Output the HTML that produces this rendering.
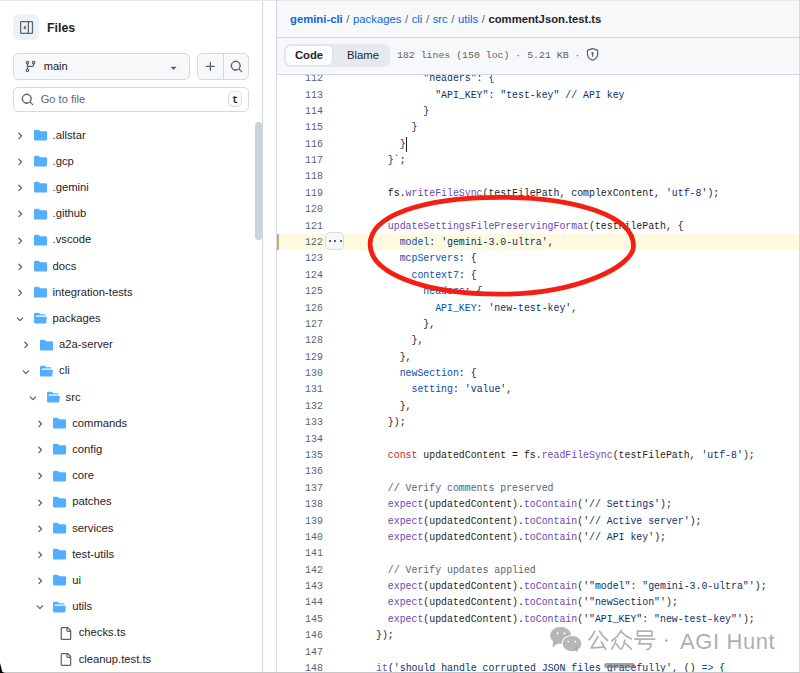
<!DOCTYPE html>
<html><head><meta charset="utf-8">
<style>
*{margin:0;padding:0;box-sizing:border-box}
html,body{width:800px;height:673px;overflow:hidden;background:#fff}
body{position:relative;font-family:"Liberation Sans",sans-serif;color:#1f2328}
.abs{position:absolute}
svg{position:absolute;overflow:visible}
.chev{width:9.83px;height:9.83px;fill:#59636e}
.fold{width:13.1px;height:12.4px;fill:#54aeff}
.file{width:13.1px;height:13.1px;fill:#59636e}
.tn{position:absolute;font-size:11.25px;line-height:16px;white-space:pre;color:#1f2328}
.ln{position:absolute;left:276px;width:46.8px;text-align:right;font-family:"Liberation Mono",monospace;font-size:9.87px;line-height:16.385px;height:16.385px;color:#59636e;white-space:pre;transform:scaleY(1.18);transform-origin:0 10.8px}
.cl{position:absolute;left:364.2px;font-family:"Liberation Mono",monospace;font-size:9.87px;line-height:16.385px;height:16.385px;color:#1f2328;white-space:pre;transform:scaleY(1.18);transform-origin:0 10.8px}
</style></head><body>

<!-- sidebar -->
<div class="abs" style="left:13px;top:14px;width:26px;height:26px;border-radius:6px;background:#eff2f5"></div>
<svg style="left:19.5px;top:20.5px;width:13.1px;height:13.1px;fill:#59636e" viewBox="0 0 16 16"><path d="M1.75 0h12.5C15.216 0 16 .784 16 1.75v12.5A1.75 1.75 0 0 1 14.25 16H1.75A1.75 1.75 0 0 1 0 14.25V1.75C0 .784.784 0 1.75 0ZM1.5 1.75v12.5c0 .138.112.25.25.25H9.5v-13H1.75a.25.25 0 0 0-.25.25ZM11 14.5h3.25a.25.25 0 0 0 .25-.25V1.75a.25.25 0 0 0-.25-.25H11Z"/><path d="M4.177 7.823 6.573 5.427A.25.25 0 0 1 7 5.604v4.792a.25.25 0 0 1-.427.177L4.177 8.177a.25.25 0 0 1 0-.354Z"/></svg>
<div class="abs" style="left:47px;top:19.5px;font-size:12.4px;font-weight:bold;line-height:16px">Files</div>

<div class="abs" style="left:13.3px;top:53.3px;width:176.3px;height:26.3px;border:1px solid #d5dade;border-radius:5px;background:#f6f8fa"></div>
<svg style="left:23.5px;top:59.5px;width:13.1px;height:13.1px;fill:#59636e" viewBox="0 0 16 16"><path d="M9.5 3.25a2.25 2.25 0 1 1 3 2.122V6A2.5 2.5 0 0 1 10 8.5H6a1 1 0 0 0-1 1v1.128a2.251 2.251 0 1 1-1.5 0V5.372a2.25 2.25 0 1 1 1.5 0v1.836A2.493 2.493 0 0 1 6 7h4a1 1 0 0 0 1-1v-.628A2.25 2.25 0 0 1 9.5 3.25Zm-6 0a.75.75 0 1 0 1.5 0 .75.75 0 0 0-1.5 0Zm8.25-.75a.75.75 0 1 0 0 1.5.75.75 0 0 0 0-1.5ZM4.25 12a.75.75 0 1 0 0 1.5.75.75 0 0 0 0-1.5Z"/></svg>
<div class="abs" style="left:43.7px;top:58px;font-size:11.1px;line-height:16px">main</div>
<svg style="left:166.7px;top:60.5px;width:13.1px;height:13.1px;fill:#59636e" viewBox="0 0 16 16"><path d="m4.427 7.427 3.396 3.396a.25.25 0 0 0 .354 0l3.396-3.396A.25.25 0 0 0 11.396 7H4.604a.25.25 0 0 0-.177.427Z"/></svg>

<div class="abs" style="left:197.3px;top:53.3px;width:51.5px;height:26.3px;border:1px solid #d5dade;border-radius:5px;background:#f6f8fa"></div>
<div class="abs" style="left:223px;top:54px;width:1px;height:25px;background:#d1d9e0"></div>
<svg style="left:203.5px;top:60px;width:13.1px;height:13.1px;fill:#59636e" viewBox="0 0 16 16"><path d="M7.75 2a.75.75 0 0 1 .75.75V7h4.25a.75.75 0 0 1 0 1.5H8.5v4.25a.75.75 0 0 1-1.5 0V8.5H2.75a.75.75 0 0 1 0-1.5H7V2.75A.75.75 0 0 1 7.75 2Z"/></svg>
<svg style="left:229.5px;top:60px;width:13.1px;height:13.1px;fill:#59636e" viewBox="0 0 16 16"><path d="M10.68 11.74a6 6 0 0 1-7.922-8.982 6 6 0 0 1 8.982 7.922l3.04 3.04a.749.749 0 0 1-.326 1.275.749.749 0 0 1-.734-.215ZM11.5 7a4.499 4.499 0 1 0-8.997 0A4.499 4.499 0 0 0 11.5 7Z"/></svg>

<div class="abs" style="left:13.3px;top:86.5px;width:235.7px;height:25.3px;border:1px solid #d5dade;border-radius:5px;background:#fff"></div>
<svg style="left:20.5px;top:93px;width:13.1px;height:13.1px;fill:#59636e" viewBox="0 0 16 16"><path d="M10.68 11.74a6 6 0 0 1-7.922-8.982 6 6 0 0 1 8.982 7.922l3.04 3.04a.749.749 0 0 1-.326 1.275.749.749 0 0 1-.734-.215ZM11.5 7a4.499 4.499 0 1 0-8.997 0A4.499 4.499 0 0 0 11.5 7Z"/></svg>
<div class="abs" style="left:40.7px;top:91px;font-size:11.1px;line-height:16px;color:#59636e">Go to file</div>
<div class="abs" style="left:228.3px;top:91.2px;width:13.8px;height:15.6px;border:1px solid #dde1e5;border-bottom-color:#d0d5da;border-radius:5px;background:#f8f9fa;font-family:'Liberation Mono',monospace;font-weight:bold;font-size:10.5px;line-height:17.3px;text-align:center;color:#2a2f35">t</div>

<svg class="chev" style="left:14.90px;top:130.80px" viewBox="0 0 12 12"><path d="M4.7 10c-.2 0-.4-.1-.5-.2-.3-.3-.3-.8 0-1.1L6.9 6 4.2 3.3c-.3-.3-.3-.8 0-1.1.3-.3.8-.3 1.1 0l3.3 3.2c.3.3.3.8 0 1.1L5.3 9.7c-.2.2-.4.3-.6.3Z"/></svg><svg class="fold" style="left:33.60px;top:129.00px" viewBox="0 0 16 16" preserveAspectRatio="none"><path d="M1.75 1A1.75 1.75 0 0 0 0 2.75v10.5C0 14.216.784 15 1.75 15h12.5A1.75 1.75 0 0 0 16 13.25v-8.5A1.75 1.75 0 0 0 14.25 3H7.5a.25.25 0 0 1-.2-.1l-.9-1.2C6.07 1.26 5.55 1 5 1H1.75Z"/></svg><div class="tn" style="left:52.50px;top:126.50px">.allstar</div>
<svg class="chev" style="left:14.90px;top:157.00px" viewBox="0 0 12 12"><path d="M4.7 10c-.2 0-.4-.1-.5-.2-.3-.3-.3-.8 0-1.1L6.9 6 4.2 3.3c-.3-.3-.3-.8 0-1.1.3-.3.8-.3 1.1 0l3.3 3.2c.3.3.3.8 0 1.1L5.3 9.7c-.2.2-.4.3-.6.3Z"/></svg><svg class="fold" style="left:33.60px;top:155.20px" viewBox="0 0 16 16" preserveAspectRatio="none"><path d="M1.75 1A1.75 1.75 0 0 0 0 2.75v10.5C0 14.216.784 15 1.75 15h12.5A1.75 1.75 0 0 0 16 13.25v-8.5A1.75 1.75 0 0 0 14.25 3H7.5a.25.25 0 0 1-.2-.1l-.9-1.2C6.07 1.26 5.55 1 5 1H1.75Z"/></svg><div class="tn" style="left:52.50px;top:152.70px">.gcp</div>
<svg class="chev" style="left:14.90px;top:183.20px" viewBox="0 0 12 12"><path d="M4.7 10c-.2 0-.4-.1-.5-.2-.3-.3-.3-.8 0-1.1L6.9 6 4.2 3.3c-.3-.3-.3-.8 0-1.1.3-.3.8-.3 1.1 0l3.3 3.2c.3.3.3.8 0 1.1L5.3 9.7c-.2.2-.4.3-.6.3Z"/></svg><svg class="fold" style="left:33.60px;top:181.40px" viewBox="0 0 16 16" preserveAspectRatio="none"><path d="M1.75 1A1.75 1.75 0 0 0 0 2.75v10.5C0 14.216.784 15 1.75 15h12.5A1.75 1.75 0 0 0 16 13.25v-8.5A1.75 1.75 0 0 0 14.25 3H7.5a.25.25 0 0 1-.2-.1l-.9-1.2C6.07 1.26 5.55 1 5 1H1.75Z"/></svg><div class="tn" style="left:52.50px;top:178.90px">.gemini</div>
<svg class="chev" style="left:14.90px;top:209.40px" viewBox="0 0 12 12"><path d="M4.7 10c-.2 0-.4-.1-.5-.2-.3-.3-.3-.8 0-1.1L6.9 6 4.2 3.3c-.3-.3-.3-.8 0-1.1.3-.3.8-.3 1.1 0l3.3 3.2c.3.3.3.8 0 1.1L5.3 9.7c-.2.2-.4.3-.6.3Z"/></svg><svg class="fold" style="left:33.60px;top:207.60px" viewBox="0 0 16 16" preserveAspectRatio="none"><path d="M1.75 1A1.75 1.75 0 0 0 0 2.75v10.5C0 14.216.784 15 1.75 15h12.5A1.75 1.75 0 0 0 16 13.25v-8.5A1.75 1.75 0 0 0 14.25 3H7.5a.25.25 0 0 1-.2-.1l-.9-1.2C6.07 1.26 5.55 1 5 1H1.75Z"/></svg><div class="tn" style="left:52.50px;top:205.10px">.github</div>
<svg class="chev" style="left:14.90px;top:235.60px" viewBox="0 0 12 12"><path d="M4.7 10c-.2 0-.4-.1-.5-.2-.3-.3-.3-.8 0-1.1L6.9 6 4.2 3.3c-.3-.3-.3-.8 0-1.1.3-.3.8-.3 1.1 0l3.3 3.2c.3.3.3.8 0 1.1L5.3 9.7c-.2.2-.4.3-.6.3Z"/></svg><svg class="fold" style="left:33.60px;top:233.80px" viewBox="0 0 16 16" preserveAspectRatio="none"><path d="M1.75 1A1.75 1.75 0 0 0 0 2.75v10.5C0 14.216.784 15 1.75 15h12.5A1.75 1.75 0 0 0 16 13.25v-8.5A1.75 1.75 0 0 0 14.25 3H7.5a.25.25 0 0 1-.2-.1l-.9-1.2C6.07 1.26 5.55 1 5 1H1.75Z"/></svg><div class="tn" style="left:52.50px;top:231.30px">.vscode</div>
<svg class="chev" style="left:14.90px;top:261.80px" viewBox="0 0 12 12"><path d="M4.7 10c-.2 0-.4-.1-.5-.2-.3-.3-.3-.8 0-1.1L6.9 6 4.2 3.3c-.3-.3-.3-.8 0-1.1.3-.3.8-.3 1.1 0l3.3 3.2c.3.3.3.8 0 1.1L5.3 9.7c-.2.2-.4.3-.6.3Z"/></svg><svg class="fold" style="left:33.60px;top:260.00px" viewBox="0 0 16 16" preserveAspectRatio="none"><path d="M1.75 1A1.75 1.75 0 0 0 0 2.75v10.5C0 14.216.784 15 1.75 15h12.5A1.75 1.75 0 0 0 16 13.25v-8.5A1.75 1.75 0 0 0 14.25 3H7.5a.25.25 0 0 1-.2-.1l-.9-1.2C6.07 1.26 5.55 1 5 1H1.75Z"/></svg><div class="tn" style="left:52.50px;top:257.50px">docs</div>
<svg class="chev" style="left:14.90px;top:288.00px" viewBox="0 0 12 12"><path d="M4.7 10c-.2 0-.4-.1-.5-.2-.3-.3-.3-.8 0-1.1L6.9 6 4.2 3.3c-.3-.3-.3-.8 0-1.1.3-.3.8-.3 1.1 0l3.3 3.2c.3.3.3.8 0 1.1L5.3 9.7c-.2.2-.4.3-.6.3Z"/></svg><svg class="fold" style="left:33.60px;top:286.20px" viewBox="0 0 16 16" preserveAspectRatio="none"><path d="M1.75 1A1.75 1.75 0 0 0 0 2.75v10.5C0 14.216.784 15 1.75 15h12.5A1.75 1.75 0 0 0 16 13.25v-8.5A1.75 1.75 0 0 0 14.25 3H7.5a.25.25 0 0 1-.2-.1l-.9-1.2C6.07 1.26 5.55 1 5 1H1.75Z"/></svg><div class="tn" style="left:52.50px;top:283.70px">integration-tests</div>
<svg class="chev" style="left:14.90px;top:314.20px" viewBox="0 0 12 12"><path d="M6 8.825c-.2 0-.4-.1-.5-.2l-3.3-3.3c-.3-.3-.3-.8 0-1.1.3-.3.8-.3 1.1 0l2.7 2.7 2.7-2.7c.3-.3.8-.3 1.1 0 .3.3.3.8 0 1.1l-3.2 3.2c-.2.2-.4.3-.6.3Z"/></svg><svg class="fold" style="left:33.60px;top:312.40px" viewBox="0 0 16 16" preserveAspectRatio="none"><path d="M.513 1.513A1.75 1.75 0 0 1 1.75 1h3.5c.55 0 1.07.26 1.4.7l.9 1.2a.25.25 0 0 0 .2.1H13a1 1 0 0 1 1 1v.5H2.75a.75.75 0 0 0 0 1.5h11.978a1 1 0 0 1 .994 1.117L15 13.25A1.75 1.75 0 0 1 13.25 15H1.75A1.75 1.75 0 0 1 0 13.25V2.75c0-.464.184-.91.513-1.237Z"/></svg><div class="tn" style="left:52.50px;top:309.90px">packages</div>
<svg class="chev" style="left:21.45px;top:340.40px" viewBox="0 0 12 12"><path d="M4.7 10c-.2 0-.4-.1-.5-.2-.3-.3-.3-.8 0-1.1L6.9 6 4.2 3.3c-.3-.3-.3-.8 0-1.1.3-.3.8-.3 1.1 0l3.3 3.2c.3.3.3.8 0 1.1L5.3 9.7c-.2.2-.4.3-.6.3Z"/></svg><svg class="fold" style="left:40.15px;top:338.60px" viewBox="0 0 16 16" preserveAspectRatio="none"><path d="M1.75 1A1.75 1.75 0 0 0 0 2.75v10.5C0 14.216.784 15 1.75 15h12.5A1.75 1.75 0 0 0 16 13.25v-8.5A1.75 1.75 0 0 0 14.25 3H7.5a.25.25 0 0 1-.2-.1l-.9-1.2C6.07 1.26 5.55 1 5 1H1.75Z"/></svg><div class="tn" style="left:59.05px;top:336.10px">a2a-server</div>
<svg class="chev" style="left:21.45px;top:366.60px" viewBox="0 0 12 12"><path d="M6 8.825c-.2 0-.4-.1-.5-.2l-3.3-3.3c-.3-.3-.3-.8 0-1.1.3-.3.8-.3 1.1 0l2.7 2.7 2.7-2.7c.3-.3.8-.3 1.1 0 .3.3.3.8 0 1.1l-3.2 3.2c-.2.2-.4.3-.6.3Z"/></svg><svg class="fold" style="left:40.15px;top:364.80px" viewBox="0 0 16 16" preserveAspectRatio="none"><path d="M.513 1.513A1.75 1.75 0 0 1 1.75 1h3.5c.55 0 1.07.26 1.4.7l.9 1.2a.25.25 0 0 0 .2.1H13a1 1 0 0 1 1 1v.5H2.75a.75.75 0 0 0 0 1.5h11.978a1 1 0 0 1 .994 1.117L15 13.25A1.75 1.75 0 0 1 13.25 15H1.75A1.75 1.75 0 0 1 0 13.25V2.75c0-.464.184-.91.513-1.237Z"/></svg><div class="tn" style="left:59.05px;top:362.30px">cli</div>
<svg class="chev" style="left:28.00px;top:392.80px" viewBox="0 0 12 12"><path d="M6 8.825c-.2 0-.4-.1-.5-.2l-3.3-3.3c-.3-.3-.3-.8 0-1.1.3-.3.8-.3 1.1 0l2.7 2.7 2.7-2.7c.3-.3.8-.3 1.1 0 .3.3.3.8 0 1.1l-3.2 3.2c-.2.2-.4.3-.6.3Z"/></svg><svg class="fold" style="left:46.70px;top:391.00px" viewBox="0 0 16 16" preserveAspectRatio="none"><path d="M.513 1.513A1.75 1.75 0 0 1 1.75 1h3.5c.55 0 1.07.26 1.4.7l.9 1.2a.25.25 0 0 0 .2.1H13a1 1 0 0 1 1 1v.5H2.75a.75.75 0 0 0 0 1.5h11.978a1 1 0 0 1 .994 1.117L15 13.25A1.75 1.75 0 0 1 13.25 15H1.75A1.75 1.75 0 0 1 0 13.25V2.75c0-.464.184-.91.513-1.237Z"/></svg><div class="tn" style="left:65.60px;top:388.50px">src</div>
<svg class="chev" style="left:34.55px;top:419.00px" viewBox="0 0 12 12"><path d="M4.7 10c-.2 0-.4-.1-.5-.2-.3-.3-.3-.8 0-1.1L6.9 6 4.2 3.3c-.3-.3-.3-.8 0-1.1.3-.3.8-.3 1.1 0l3.3 3.2c.3.3.3.8 0 1.1L5.3 9.7c-.2.2-.4.3-.6.3Z"/></svg><svg class="fold" style="left:53.25px;top:417.20px" viewBox="0 0 16 16" preserveAspectRatio="none"><path d="M1.75 1A1.75 1.75 0 0 0 0 2.75v10.5C0 14.216.784 15 1.75 15h12.5A1.75 1.75 0 0 0 16 13.25v-8.5A1.75 1.75 0 0 0 14.25 3H7.5a.25.25 0 0 1-.2-.1l-.9-1.2C6.07 1.26 5.55 1 5 1H1.75Z"/></svg><div class="tn" style="left:72.15px;top:414.70px">commands</div>
<svg class="chev" style="left:34.55px;top:445.20px" viewBox="0 0 12 12"><path d="M4.7 10c-.2 0-.4-.1-.5-.2-.3-.3-.3-.8 0-1.1L6.9 6 4.2 3.3c-.3-.3-.3-.8 0-1.1.3-.3.8-.3 1.1 0l3.3 3.2c.3.3.3.8 0 1.1L5.3 9.7c-.2.2-.4.3-.6.3Z"/></svg><svg class="fold" style="left:53.25px;top:443.40px" viewBox="0 0 16 16" preserveAspectRatio="none"><path d="M1.75 1A1.75 1.75 0 0 0 0 2.75v10.5C0 14.216.784 15 1.75 15h12.5A1.75 1.75 0 0 0 16 13.25v-8.5A1.75 1.75 0 0 0 14.25 3H7.5a.25.25 0 0 1-.2-.1l-.9-1.2C6.07 1.26 5.55 1 5 1H1.75Z"/></svg><div class="tn" style="left:72.15px;top:440.90px">config</div>
<svg class="chev" style="left:34.55px;top:471.40px" viewBox="0 0 12 12"><path d="M4.7 10c-.2 0-.4-.1-.5-.2-.3-.3-.3-.8 0-1.1L6.9 6 4.2 3.3c-.3-.3-.3-.8 0-1.1.3-.3.8-.3 1.1 0l3.3 3.2c.3.3.3.8 0 1.1L5.3 9.7c-.2.2-.4.3-.6.3Z"/></svg><svg class="fold" style="left:53.25px;top:469.60px" viewBox="0 0 16 16" preserveAspectRatio="none"><path d="M1.75 1A1.75 1.75 0 0 0 0 2.75v10.5C0 14.216.784 15 1.75 15h12.5A1.75 1.75 0 0 0 16 13.25v-8.5A1.75 1.75 0 0 0 14.25 3H7.5a.25.25 0 0 1-.2-.1l-.9-1.2C6.07 1.26 5.55 1 5 1H1.75Z"/></svg><div class="tn" style="left:72.15px;top:467.10px">core</div>
<svg class="chev" style="left:34.55px;top:497.60px" viewBox="0 0 12 12"><path d="M4.7 10c-.2 0-.4-.1-.5-.2-.3-.3-.3-.8 0-1.1L6.9 6 4.2 3.3c-.3-.3-.3-.8 0-1.1.3-.3.8-.3 1.1 0l3.3 3.2c.3.3.3.8 0 1.1L5.3 9.7c-.2.2-.4.3-.6.3Z"/></svg><svg class="fold" style="left:53.25px;top:495.80px" viewBox="0 0 16 16" preserveAspectRatio="none"><path d="M1.75 1A1.75 1.75 0 0 0 0 2.75v10.5C0 14.216.784 15 1.75 15h12.5A1.75 1.75 0 0 0 16 13.25v-8.5A1.75 1.75 0 0 0 14.25 3H7.5a.25.25 0 0 1-.2-.1l-.9-1.2C6.07 1.26 5.55 1 5 1H1.75Z"/></svg><div class="tn" style="left:72.15px;top:493.30px">patches</div>
<svg class="chev" style="left:34.55px;top:523.80px" viewBox="0 0 12 12"><path d="M4.7 10c-.2 0-.4-.1-.5-.2-.3-.3-.3-.8 0-1.1L6.9 6 4.2 3.3c-.3-.3-.3-.8 0-1.1.3-.3.8-.3 1.1 0l3.3 3.2c.3.3.3.8 0 1.1L5.3 9.7c-.2.2-.4.3-.6.3Z"/></svg><svg class="fold" style="left:53.25px;top:522.00px" viewBox="0 0 16 16" preserveAspectRatio="none"><path d="M1.75 1A1.75 1.75 0 0 0 0 2.75v10.5C0 14.216.784 15 1.75 15h12.5A1.75 1.75 0 0 0 16 13.25v-8.5A1.75 1.75 0 0 0 14.25 3H7.5a.25.25 0 0 1-.2-.1l-.9-1.2C6.07 1.26 5.55 1 5 1H1.75Z"/></svg><div class="tn" style="left:72.15px;top:519.50px">services</div>
<svg class="chev" style="left:34.55px;top:550.00px" viewBox="0 0 12 12"><path d="M4.7 10c-.2 0-.4-.1-.5-.2-.3-.3-.3-.8 0-1.1L6.9 6 4.2 3.3c-.3-.3-.3-.8 0-1.1.3-.3.8-.3 1.1 0l3.3 3.2c.3.3.3.8 0 1.1L5.3 9.7c-.2.2-.4.3-.6.3Z"/></svg><svg class="fold" style="left:53.25px;top:548.20px" viewBox="0 0 16 16" preserveAspectRatio="none"><path d="M1.75 1A1.75 1.75 0 0 0 0 2.75v10.5C0 14.216.784 15 1.75 15h12.5A1.75 1.75 0 0 0 16 13.25v-8.5A1.75 1.75 0 0 0 14.25 3H7.5a.25.25 0 0 1-.2-.1l-.9-1.2C6.07 1.26 5.55 1 5 1H1.75Z"/></svg><div class="tn" style="left:72.15px;top:545.70px">test-utils</div>
<svg class="chev" style="left:34.55px;top:576.20px" viewBox="0 0 12 12"><path d="M4.7 10c-.2 0-.4-.1-.5-.2-.3-.3-.3-.8 0-1.1L6.9 6 4.2 3.3c-.3-.3-.3-.8 0-1.1.3-.3.8-.3 1.1 0l3.3 3.2c.3.3.3.8 0 1.1L5.3 9.7c-.2.2-.4.3-.6.3Z"/></svg><svg class="fold" style="left:53.25px;top:574.40px" viewBox="0 0 16 16" preserveAspectRatio="none"><path d="M1.75 1A1.75 1.75 0 0 0 0 2.75v10.5C0 14.216.784 15 1.75 15h12.5A1.75 1.75 0 0 0 16 13.25v-8.5A1.75 1.75 0 0 0 14.25 3H7.5a.25.25 0 0 1-.2-.1l-.9-1.2C6.07 1.26 5.55 1 5 1H1.75Z"/></svg><div class="tn" style="left:72.15px;top:571.90px">ui</div>
<svg class="chev" style="left:34.55px;top:602.40px" viewBox="0 0 12 12"><path d="M6 8.825c-.2 0-.4-.1-.5-.2l-3.3-3.3c-.3-.3-.3-.8 0-1.1.3-.3.8-.3 1.1 0l2.7 2.7 2.7-2.7c.3-.3.8-.3 1.1 0 .3.3.3.8 0 1.1l-3.2 3.2c-.2.2-.4.3-.6.3Z"/></svg><svg class="fold" style="left:53.25px;top:600.60px" viewBox="0 0 16 16" preserveAspectRatio="none"><path d="M.513 1.513A1.75 1.75 0 0 1 1.75 1h3.5c.55 0 1.07.26 1.4.7l.9 1.2a.25.25 0 0 0 .2.1H13a1 1 0 0 1 1 1v.5H2.75a.75.75 0 0 0 0 1.5h11.978a1 1 0 0 1 .994 1.117L15 13.25A1.75 1.75 0 0 1 13.25 15H1.75A1.75 1.75 0 0 1 0 13.25V2.75c0-.464.184-.91.513-1.237Z"/></svg><div class="tn" style="left:72.15px;top:598.10px">utils</div>
<svg class="file" style="left:59.00px;top:626.80px" viewBox="0 0 16 16"><path d="M2 1.75C2 .784 2.784 0 3.75 0h6.586c.464 0 .909.184 1.237.513l2.914 2.914c.329.328.513.773.513 1.237v9.586A1.75 1.75 0 0 1 13.25 16h-9.5A1.75 1.75 0 0 1 2 14.25Zm1.75-.25a.25.25 0 0 0-.25.25v12.5c0 .138.112.25.25.25h9.5a.25.25 0 0 0 .25-.25V6h-2.75A1.75 1.75 0 0 1 9 4.25V1.5Zm6.75.062V4.25c0 .138.112.25.25.25h2.688l-.011-.013-2.914-2.914-.013-.011Z"/></svg><div class="tn" style="left:78.70px;top:624.30px">checks.ts</div>
<svg class="file" style="left:59.00px;top:653.00px" viewBox="0 0 16 16"><path d="M2 1.75C2 .784 2.784 0 3.75 0h6.586c.464 0 .909.184 1.237.513l2.914 2.914c.329.328.513.773.513 1.237v9.586A1.75 1.75 0 0 1 13.25 16h-9.5A1.75 1.75 0 0 1 2 14.25Zm1.75-.25a.25.25 0 0 0-.25.25v12.5c0 .138.112.25.25.25h9.5a.25.25 0 0 0 .25-.25V6h-2.75A1.75 1.75 0 0 1 9 4.25V1.5Zm6.75.062V4.25c0 .138.112.25.25.25h2.688l-.011-.013-2.914-2.914-.013-.011Z"/></svg><div class="tn" style="left:78.70px;top:650.50px">cleanup.test.ts</div>

<div class="abs" style="left:254.5px;top:122px;width:7.5px;height:118px;border-radius:4px;background:#c9d4dd"></div>
<div class="abs" style="left:262px;top:0;width:1px;height:673px;background:#d1d9e0"></div>

<!-- code box -->
<div class="abs" style="left:276px;top:0;width:524px;height:74px;background:#f6f8fa"></div>
<div class="abs" style="left:0;top:0;width:800px;height:1px;background:#e6e8ea"></div>
<div class="abs" style="left:276px;top:37px;width:524px;height:1px;background:#d1d9e0"></div>
<div class="abs" style="left:276px;top:0;width:1px;height:673px;background:#d1d9e0"></div>
<div class="abs" style="left:799px;top:0;width:1px;height:673px;background:#d6dade"></div>

<div class="abs" style="left:290px;top:10.5px;font-size:11.3px;line-height:16px;white-space:pre;color:#59636e"><b style="color:#0969da">gemini-cli</b><span style="padding:0 0.45px"> / </span><span style="color:#0969da">packages</span><span style="padding:0 0.45px"> / </span><span style="color:#0969da">cli</span><span style="padding:0 0.45px"> / </span><span style="color:#0969da">src</span><span style="padding:0 0.45px"> / </span><span style="color:#0969da">utils</span><span style="padding:0 0.45px"> / </span><b style="color:#1f2328">commentJson.test.ts</b></div>

<!-- highlight -->
<div class="abs" style="left:277px;top:234px;width:522px;height:16.385px;background:#fefae0"></div>
<div class="abs" style="left:277px;top:234px;width:2px;height:16.385px;background:#c4ad7c"></div>

<div class="ln" style="top:71.15px">112</div><div class="cl" style="top:71.15px">          <span style="color:#0a3069">&quot;headers&quot;: {</span></div>
<div class="ln" style="top:87.53px">113</div><div class="cl" style="top:87.53px">            <span style="color:#0a3069">&quot;API_KEY&quot;: &quot;test-key&quot; // API key</span></div>
<div class="ln" style="top:103.92px">114</div><div class="cl" style="top:103.92px">          <span style="color:#0a3069">}</span></div>
<div class="ln" style="top:120.30px">115</div><div class="cl" style="top:120.30px">        <span style="color:#0a3069">}</span></div>
<div class="ln" style="top:136.69px">116</div><div class="cl" style="top:136.69px">      <span style="color:#0a3069">}</span></div>
<div class="ln" style="top:153.07px">117</div><div class="cl" style="top:153.07px">    <span style="color:#0a3069">}`</span>;</div>
<div class="ln" style="top:169.46px">118</div><div class="cl" style="top:169.46px"></div>
<div class="ln" style="top:185.84px">119</div><div class="cl" style="top:185.84px">    fs.<span style="color:#6c47b8">writeFileSync</span>(testFilePath, complexContent, <span style="color:#0a3069">&#x27;utf-8&#x27;</span>);</div>
<div class="ln" style="top:202.23px">120</div><div class="cl" style="top:202.23px"></div>
<div class="ln" style="top:218.61px">121</div><div class="cl" style="top:218.61px">    <span style="color:#6c47b8">updateSettingsFilePreservingFormat</span>(testFilePath, {</div>
<div class="ln" style="top:235.00px">122</div><div class="cl" style="top:235.00px">      <span style="color:#0550ae">model</span>: <span style="color:#0a3069">&#x27;gemini-3.0-ultra&#x27;</span>,</div>
<div class="ln" style="top:251.38px">123</div><div class="cl" style="top:251.38px">      <span style="color:#0550ae">mcpServers</span>: {</div>
<div class="ln" style="top:267.77px">124</div><div class="cl" style="top:267.77px">        <span style="color:#0550ae">context7</span>: {</div>
<div class="ln" style="top:284.15px">125</div><div class="cl" style="top:284.15px">          <span style="color:#0550ae">headers</span>: {</div>
<div class="ln" style="top:300.54px">126</div><div class="cl" style="top:300.54px">            <span style="color:#0550ae">API_KEY</span>: <span style="color:#0a3069">&#x27;new-test-key&#x27;</span>,</div>
<div class="ln" style="top:316.93px">127</div><div class="cl" style="top:316.93px">          },</div>
<div class="ln" style="top:333.31px">128</div><div class="cl" style="top:333.31px">        },</div>
<div class="ln" style="top:349.69px">129</div><div class="cl" style="top:349.69px">      },</div>
<div class="ln" style="top:366.08px">130</div><div class="cl" style="top:366.08px">      <span style="color:#0550ae">newSection</span>: {</div>
<div class="ln" style="top:382.47px">131</div><div class="cl" style="top:382.47px">        <span style="color:#0550ae">setting</span>: <span style="color:#0a3069">&#x27;value&#x27;</span>,</div>
<div class="ln" style="top:398.85px">132</div><div class="cl" style="top:398.85px">      },</div>
<div class="ln" style="top:415.24px">133</div><div class="cl" style="top:415.24px">    });</div>
<div class="ln" style="top:431.62px">134</div><div class="cl" style="top:431.62px"></div>
<div class="ln" style="top:448.00px">135</div><div class="cl" style="top:448.00px">    <span style="color:#cf222e">const</span> updatedContent = fs.<span style="color:#6c47b8">readFileSync</span>(testFilePath, <span style="color:#0a3069">&#x27;utf-8&#x27;</span>);</div>
<div class="ln" style="top:464.39px">136</div><div class="cl" style="top:464.39px"></div>
<div class="ln" style="top:480.78px">137</div><div class="cl" style="top:480.78px">    <span style="color:#59636e">// Verify comments preserved</span></div>
<div class="ln" style="top:497.16px">138</div><div class="cl" style="top:497.16px">    <span style="color:#6c47b8">expect</span>(updatedContent).<span style="color:#6c47b8">toContain</span>(<span style="color:#0a3069">&#x27;// Settings&#x27;</span>);</div>
<div class="ln" style="top:513.55px">139</div><div class="cl" style="top:513.55px">    <span style="color:#6c47b8">expect</span>(updatedContent).<span style="color:#6c47b8">toContain</span>(<span style="color:#0a3069">&#x27;// Active server&#x27;</span>);</div>
<div class="ln" style="top:529.93px">140</div><div class="cl" style="top:529.93px">    <span style="color:#6c47b8">expect</span>(updatedContent).<span style="color:#6c47b8">toContain</span>(<span style="color:#0a3069">&#x27;// API key&#x27;</span>);</div>
<div class="ln" style="top:546.32px">141</div><div class="cl" style="top:546.32px"></div>
<div class="ln" style="top:562.70px">142</div><div class="cl" style="top:562.70px">    <span style="color:#59636e">// Verify updates applied</span></div>
<div class="ln" style="top:579.09px">143</div><div class="cl" style="top:579.09px">    <span style="color:#6c47b8">expect</span>(updatedContent).<span style="color:#6c47b8">toContain</span>(<span style="color:#0a3069">&#x27;&quot;model&quot;: &quot;gemini-3.0-ultra&quot;&#x27;</span>);</div>
<div class="ln" style="top:595.47px">144</div><div class="cl" style="top:595.47px">    <span style="color:#6c47b8">expect</span>(updatedContent).<span style="color:#6c47b8">toContain</span>(<span style="color:#0a3069">&#x27;&quot;newSection&quot;&#x27;</span>);</div>
<div class="ln" style="top:611.86px">145</div><div class="cl" style="top:611.86px">    <span style="color:#6c47b8">expect</span>(updatedContent).<span style="color:#6c47b8">toContain</span>(<span style="color:#0a3069">&#x27;&quot;API_KEY&quot;: &quot;new-test-key&quot;&#x27;</span>);</div>
<div class="ln" style="top:628.24px">146</div><div class="cl" style="top:628.24px">  });</div>
<div class="ln" style="top:644.62px">147</div><div class="cl" style="top:644.62px"></div>
<div class="ln" style="top:661.01px">148</div><div class="cl" style="top:661.01px">  <span style="color:#6c47b8">it</span>(<span style="color:#0a3069">&#x27;should handle corrupted JSON files gracefully&#x27;</span>, () <span style="color:#0550ae">=&gt;</span> {</div>

<div class="abs" style="left:277px;top:38px;width:522px;height:37px;background:#f6f8fa;border-bottom:1px solid #d1d9e0"></div>
<div class="abs" style="left:284.3px;top:44.3px;width:105.7px;height:22.7px;border-radius:6px;background:#e6eaef"></div>
<div class="abs" style="left:285px;top:45px;width:48px;height:21.3px;border-radius:6px;background:#fff;border:1px solid #dde2e7;font-size:11.3px;font-weight:bold;line-height:19px;text-align:center">Code</div>
<div class="abs" style="left:334.5px;top:45px;width:57px;height:21.3px;font-size:11.3px;line-height:21px;text-align:center;color:#1f2328">Blame</div>
<div class="abs" style="left:397px;top:48px;font-family:'Liberation Mono',monospace;font-size:9.87px;line-height:16px;color:#59636e;white-space:pre">182 lines (150 loc) · 5.21 KB ·</div>
<svg style="left:586px;top:48px;width:13.1px;height:13.1px;fill:#59636e" viewBox="0 0 16 16"><path d="M7.467.133a1.748 1.748 0 0 1 1.066 0l5.25 1.68A1.75 1.75 0 0 1 15 3.48V7c0 1.566-.32 3.182-1.303 4.682-.983 1.498-2.585 2.813-5.032 3.855a1.697 1.697 0 0 1-1.33 0c-2.447-1.042-4.049-2.357-5.032-3.855C1.32 10.182 1 8.566 1 7V3.48a1.755 1.755 0 0 1 1.217-1.667Zm.61 1.429a.25.25 0 0 0-.153 0l-5.25 1.68a.25.25 0 0 0-.174.238V7c0 1.358.275 2.666 1.057 3.86.784 1.194 2.121 2.34 4.366 3.297a.196.196 0 0 0 .154 0c2.245-.956 3.582-2.104 4.366-3.298C13.225 9.666 13.5 8.36 13.5 7V3.48a.251.251 0 0 0-.174-.237l-5.25-1.68ZM9.5 6.5a1.5 1.5 0 0 1-.75 1.3V10a.75.75 0 0 1-1.5 0V7.8A1.5 1.5 0 1 1 9.5 6.5Z"/></svg>

<!-- dots button -->
<div class="abs" style="left:325.4px;top:231.7px;width:19px;height:18.7px;border-radius:5px;background:#f6f8fa;border:1px solid #d8dce0"></div>
<div class="abs" style="left:329px;top:240px;width:2px;height:2px;border-radius:1px;background:#2a2f35"></div>
<div class="abs" style="left:334.3px;top:240px;width:2px;height:2px;border-radius:1px;background:#2a2f35"></div>
<div class="abs" style="left:339.6px;top:240px;width:2px;height:2px;border-radius:1px;background:#2a2f35"></div>

<!-- cursor -->
<div class="abs" style="left:405.5px;top:137px;width:1.2px;height:15px;background:#1f2328"></div>

<!-- red ellipse -->
<svg style="left:0;top:0;width:800px;height:673px" viewBox="0 0 800 673"><path d="M370.1 244.3C370.1 216.1 420.9 197.3 500.4 197.3C575.1 197.3 633.5 215.9 633.5 245.9C633.5 267.0 575.4 294.2 500.2 294.2C421.6 294.2 370.1 272.4 370.1 244.3Z" fill="none" stroke="#f51e12" stroke-width="4.8"/></svg>

<!-- watermark -->
<div class="abs" style="left:603.5px;top:662.7px;width:31.5px;height:5.5px;border-radius:3px;background:rgba(110,110,110,.65)"></div>
<svg style="left:0;top:0;width:800px;height:673px" viewBox="0 0 800 673">
<g fill="#a9a9a9" fill-opacity=".85">
<ellipse cx="560.7" cy="635.5" rx="10.6" ry="8.4"/>
<path d="M553 641 L552.5 647.5 L558.5 643 Z"/>
</g>
<ellipse cx="572" cy="643.7" rx="10.6" ry="8.8" fill="#fff"/>
<g fill="#a9a9a9" fill-opacity=".85">
<ellipse cx="572" cy="643.7" rx="9.3" ry="7.6"/>
<path d="M574 649 L578 652.5 L577.5 646 Z"/>
</g>
<g fill="#fff">
<circle cx="557.7" cy="633.2" r="1"/><circle cx="564.5" cy="633.2" r="1"/>
<circle cx="568.3" cy="641.6" r="0.95"/><circle cx="575.2" cy="641.6" r="0.95"/>
</g>
<g fill="none" stroke="#a9a9a9" stroke-opacity=".9" stroke-width="1.7" stroke-linecap="round" stroke-linejoin="round">
<path d="M594.8 631.2 Q592.5 636.5 588.8 640"/>
<path d="M599.5 631.2 Q603 636.5 607.5 640.5"/>
<path d="M598.1 636.3 L591.1 648 L603.8 647.1"/>
<path d="M601.4 642 L605.6 649.4"/>
<path d="M621.5 630.3 Q618 636.5 611.7 641"/>
<path d="M621.3 631.8 Q625.5 636.5 631.4 639"/>
<path d="M616 640 Q614.5 645.5 611.7 649"/>
<path d="M616.3 644 L619.8 648.5"/>
<path d="M624.8 640 Q624 645.5 621.5 649"/>
<path d="M625 643 L631.4 649.2"/>
<path d="M637.5 631.2 L652 631.2 L652 635.8 L637.5 635.8 Z"/>
<path d="M634.7 639.1 L654.8 639.1"/>
<path d="M640.3 640.2 L638.9 643.8 L651.1 643.8 Q650.5 649.4 646.9 649.4"/>
</g>
<circle cx="666.4" cy="640.5" r="1.3" fill="#a9a9a9"/>
</svg>
<div class="abs" style="left:680px;top:629.5px;font-size:22px;letter-spacing:0.6px;line-height:24px;color:rgba(160,160,160,.85);white-space:pre">AGI Hunt</div>

<div class="abs" style="left:0;top:672px;width:800px;height:1px;background:#c8c8c8"></div>
<svg style="left:0;top:663px;width:8px;height:10px" viewBox="0 663 8 10"><path d="M0 663 L0 673 L6 673 Q1.5 673 1.5 668.5 Z" fill="#000"/></svg>
</body></html>
